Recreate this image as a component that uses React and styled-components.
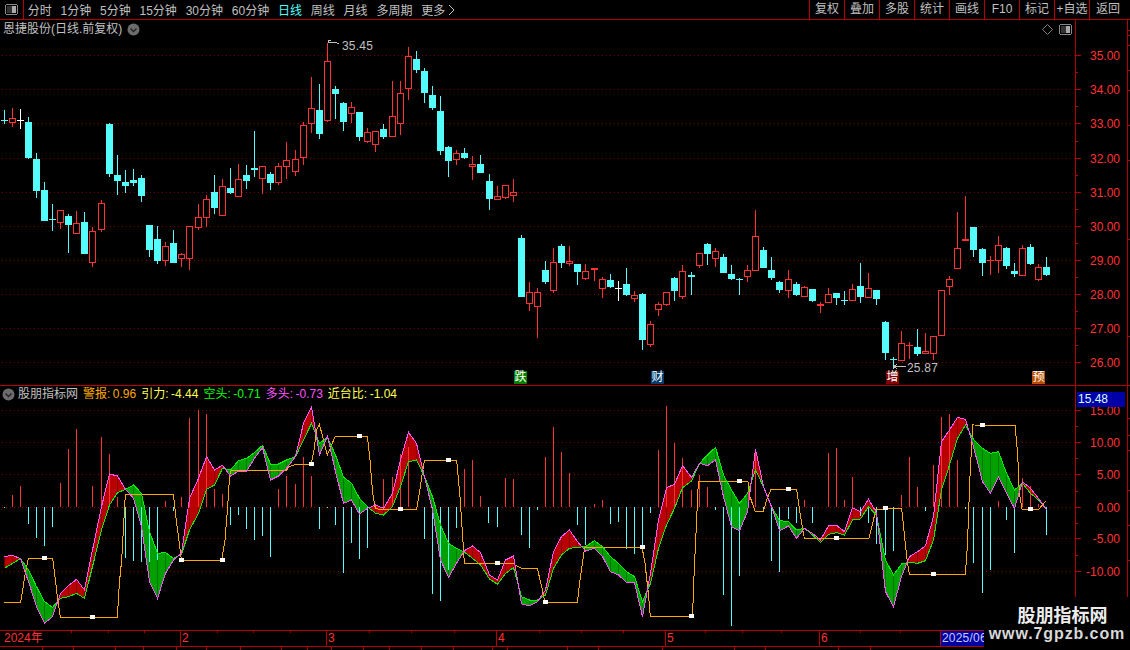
import React from "react";
import styled, { createGlobalStyle } from "styled-components";

const LINE = "#b40000";
const RED = "#ff3232";
const CYAN = "#54fcfc";
const FONT = `"Liberation Sans", "Noto Sans CJK SC", sans-serif`;

const Global = createGlobalStyle`
  html, body { margin: 0; padding: 0; background: #000; }
  #root { width: 1130px; height: 650px; }
`;

const Page = styled.div`
  position: relative;
  width: 1130px;
  height: 650px;
  overflow: hidden;
  background: #000;
  font: 12px ${FONT};
  color: #c0c0c0;
  display: flex;
  flex-direction: column;
`;

const Toolbar = styled.header`
  flex: none;
  height: 19px;
  display: flex;
  align-items: stretch;
  border-bottom: 1px solid ${LINE};
`;
const ToolbarIcon = styled.div`
  width: 23px;
  border-right: 1px solid ${LINE};
  display: flex;
  align-items: center;
  justify-content: center;
`;
const PeriodList = styled.nav`
  display: flex;
  align-items: center;
  gap: 8.8px;
  padding-left: 3.7px;
`;
const Period = styled.span`
  display: inline-flex;
  align-items: center;
  gap: 3px;
  white-space: nowrap;
  color: ${(p) => (p.$active ? CYAN : "#c0c0c0")};
`;
const ToolGroup = styled.div`
  margin-left: auto;
  display: flex;
`;
const ToolButton = styled.button`
  all: unset;
  box-sizing: border-box;
  width: ${(p) => p.$w || 35}px;
  padding-right: ${(p) => p.$pad || 0}px;
  border-left: 1px solid ${LINE};
  text-align: center;
  font: 12px/19px ${FONT};
  color: #c0c0c0;
  white-space: nowrap;
`;

const PanelRow = styled.section`
  position: relative;
  flex: none;
  height: ${(p) => p.$h}px;
  display: flex;
  border-bottom: ${(p) => (p.$rule ? `1px solid ${LINE}` : "none")};
`;
const PlotSvg = styled.svg`
  display: block;
  flex: none;
  width: 1075px;
  height: 100%;
`;
const AxisSvg = styled.svg`
  display: block;
  flex: none;
  width: 51px;
  height: 100%;
  border-left: 1px solid ${LINE};
  border-right: 1px solid ${LINE};
  box-sizing: content-box;
`;
const EdgeSvg = styled.svg`
  display: block;
  flex: none;
  width: 2px;
  height: 100%;
`;

const PanelTitle = styled.div`
  position: absolute;
  left: 3px;
  top: 2px;
  display: flex;
  align-items: center;
  gap: 5px;
  line-height: 14px;
`;
const PanelTools = styled.div`
  position: absolute;
  left: 1042px;
  top: 4px;
  display: flex;
  align-items: center;
  gap: 6px;
`;
const Badge = styled.span`
  position: absolute;
  left: ${(p) => p.$x}px;
  top: 351px;
  width: 13px;
  height: 13px;
  background: ${(p) => p.$bg};
  color: #fff;
  font: 12px/13px ${FONT};
  text-align: center;
`;
const Legend = styled.div`
  position: absolute;
  left: 2px;
  top: 1px;
  display: flex;
  align-items: center;
  line-height: 15px;
  white-space: nowrap;
`;
const LegendName = styled.span`
  margin: 0 5px 0 3px;
  color: #c0c0c0;
`;
const LegendItem = styled.span`
  color: ${(p) => p.$c};
  margin-right: 5px;
`;
const LegendNumber = styled.span`
  margin-left: 2.5px;
`;
const ValueFlag = styled.div`
  position: absolute;
  left: 1077px;
  top: 6px;
  width: 48px;
  height: 15px;
  background: #0000a8;
  color: #d8ffff;
  font: 12px/15px ${FONT};
  padding-left: 1px;
  box-sizing: border-box;
`;

const TimeAxis = styled.div`
  position: relative;
  flex: none;
  height: 15px;
  display: flex;
  border-top: 1px solid ${LINE};
  border-bottom: 1px solid ${LINE};
  color: ${RED};
  line-height: 15px;
`;
const TimeCell = styled.div`
  box-sizing: border-box;
  flex: none;
  width: ${(p) => p.$w}px;
  padding-left: ${(p) => p.$pad || 1}px;
  border-right: 1px solid ${LINE};
`;
const CurrentDate = styled.div`
  background: #0000a0;
  color: #c8c8ff;
  padding: 0 2px 0 1px;
  flex: none;
  letter-spacing: 0.2px;
`;
const TimeTicks = styled.svg`
  position: absolute;
  left: 0;
  top: 0;
  width: 1075px;
  height: 3px;
`;
const TabStrip = styled.div`
  flex: none;
  height: 3px;
  display: flex;
`;
const Tab = styled.div`
  box-sizing: border-box;
  flex: none;
  width: ${(p) => p.$w}px;
  border-right: 1px solid ${LINE};
`;

const Watermark = styled.aside`
  position: absolute;
  left: 984px;
  top: 597px;
  right: 0;
  bottom: 0;
  background: #000;
  display: flex;
  flex-direction: column;
  align-items: center;
  padding-top: 7px;
  box-sizing: border-box;
  color: #ececec;
`;
const WatermarkName = styled.div`
  margin-left: 11px;
  font: 700 18px/20px "Noto Sans CJK SC", sans-serif;
`;
const WatermarkUrl = styled.div`
  font: 700 16px/19px "Liberation Sans", sans-serif;
  letter-spacing: 0.9px;
  color: #d8d8d8;
`;

const candles = [
  [110,120,120,124,"c"],[108,118,123,127,"r"],[109,120,120,129,"w"],[117,122,158,159,"c"],[153,159,191,198,"c"],[182,190,221,221,"c"],[204,219,219,231,"c"],[210,210,223,229,"r"],[214,216,225,253,"c"],[211,223,234,234,"r"],
  [212,222,254,254,"c"],[227,231,263,267,"r"],[200,203,230,232,"r"],[123,124,174,177,"c"],[155,175,181,195,"c"],[170,182,186,193,"c"],[169,180,183,186,"c"],[175,178,196,202,"c"],[225,225,250,257,"c"],[226,239,261,264,"c"],
  [242,246,261,266,"r"],[230,243,263,263,"c"],[253,254,259,267,"r"],[226,226,259,270,"r"],[204,217,228,230,"r"],[195,199,218,227,"r"],[175,192,208,214,"c"],[179,186,216,216,"r"],[168,188,193,194,"c"],[164,179,197,197,"r"],
  [165,175,181,189,"c"],[131,168,170,177,"c"],[166,166,179,194,"r"],[172,174,183,190,"c"],[163,166,183,185,"r"],[142,160,167,179,"r"],[150,159,172,176,"r"],[122,125,158,165,"r"],[77,108,124,133,"r"],[84,110,134,139,"c"],
  [43,61,121,122,"r"],[86,89,94,119,"c"],[102,103,122,131,"c"],[102,107,114,123,"r"],[112,112,137,141,"c"],[128,132,142,143,"r"],[131,131,145,152,"r"],[124,129,137,139,"c"],[81,116,137,137,"r"],[81,93,124,135,"r"],
  [47,56,89,100,"r"],[51,59,70,73,"c"],[68,71,93,103,"c"],[86,95,108,110,"c"],[96,111,151,155,"c"],[146,147,161,177,"c"],[150,153,160,165,"r"],[148,153,158,159,"c"],[156,164,167,180,"r"],[155,164,173,173,"c"],
  [174,181,199,210,"c"],[186,196,200,200,"r"],[185,185,198,199,"r"],[179,192,196,202,"r"],[235,238,297,297,"c"],[282,292,304,311,"r"],[288,292,307,338,"r"],[261,270,282,284,"c"],[248,262,291,293,"r"],[244,246,263,268,"c"],
  [246,261,264,266,"r"],[264,264,272,285,"c"],[264,271,279,280,"r"],[268,268,270,281,"R"],[277,279,289,298,"r"],[274,280,287,288,"c"],[281,288,288,301,"w"],[268,284,295,296,"c"],[291,295,299,302,"r"],[293,294,340,350,"c"],
  [321,324,345,347,"r"],[302,304,310,316,"r"],[292,292,305,306,"r"],[277,278,291,301,"c"],[265,271,297,299,"r"],[272,275,277,295,"C"],[253,253,266,268,"r"],[243,244,254,265,"c"],[248,251,259,267,"r"],[254,257,273,273,"c"],
  [265,274,279,280,"c"],[278,279,279,295,"c"],[265,270,277,282,"r"],[210,236,271,271,"r"],[247,250,268,268,"c"],[257,270,278,280,"c"],[281,282,290,293,"c"],[270,279,291,298,"r"],[282,284,295,296,"c"],[286,287,297,297,"r"],
  [289,289,301,302,"c"],[302,304,306,313,"r"],[288,294,303,303,"r"],[293,293,298,305,"c"],[291,300,300,305,"c"],[284,289,301,301,"r"],[263,286,297,303,"c"],[273,288,298,298,"r"],[290,290,299,305,"c"],[321,322,353,360,"c"],
  [357,359,359,369,"c"],[331,343,361,361,"r"],[342,345,345,359,"r"],[329,347,354,356,"c"],[333,351,354,354,"r"],[336,336,354,360,"r"],[290,290,336,336,"r"],[276,279,287,295,"r"],[212,248,269,269,"r"],[196,239,241,241,"R"],
  [227,227,250,257,"c"],[248,249,263,276,"c"],[256,260,260,275,"r"],[236,245,261,273,"r"],[247,248,266,269,"c"],[263,271,274,277,"c"],[245,248,276,276,"r"],[244,247,264,265,"c"],[264,267,280,281,"r"],[257,267,275,276,"c"],
];

const M = [470,466,476,545,620,670,650,580,557,538,570,450,320,222,228,268,295,380,545,595,520,480,460,295,235,170,210,196,228,214,214,175,142,240,228,205,170,70,20,165,108,215,310,300,342,325,315,
  325,280,180,97,130,230,330,480,532,490,452,438,458,525,540,480,468,612,617,605,570,455,410,390,425,453,445,470,515,525,547,548,650,520,360,263,253,197,232,190,197,180,290,380,392,335,
  148,260,320,392,378,415,385,400,420,378,376,395,323,335,298,338,575,620,530,470,455,437,350,125,90,52,58,140,245,280,232,280,325,245,265,295,330];
const G = [505,490,476,510,560,605,622,595,590,580,595,500,390,315,278,268,255,280,395,460,458,475,462,390,340,268,255,205,210,182,175,158,136,192,192,180,170,120,70,130,112,165,232,250,295,320,340,
  345,320,260,185,180,230,290,375,430,445,457,475,495,537,553,520,503,590,600,600,585,505,465,445,442,440,422,440,470,490,515,530,605,550,445,375,325,263,243,190,165,142,225,270,310,280,
  210,260,320,362,365,390,385,405,427,403,398,405,360,357,320,345,480,525,492,487,490,482,420,270,195,115,75,118,145,160,155,220,270,250,280,300,325];

const px = (i) => 4 + 8 * i + Math.floor((i + 0.5) / 12.1);
const zy = (Y) => 400 + Y / 3;

const zoomed = (off, pts) => pts.map(([X, Y]) => [off + X / 3, zy(Y)]);
const orange = [
  ...zoomed(0, [[13,607],[62,607],[68,570],[74,530],[85,476],[158,476],[165,530],[172,590],[181,652],[352,652],[358,550],[365,480],[376,282],[520,282],[530,370],[538,430],[544,480],[665,482],[675,420],[683,320],[688,240],[691,212],[858,212],[868,200],[885,194],[934,192],[942,150],[950,90],[958,72],[982,165],[1006,108],[1102,108],[1110,180],[1118,280],[1126,325]]),
  ...zoomed(380, [[0,328],[110,328],[118,280],[130,200],[133,182],[230,181],[240,290],[250,440],[253,490],[400,490],[405,495],[425,505],[472,505],[485,560],[495,607],[592,607],[600,540],[612,455],[615,442],[786,441],[795,490],[805,580],[811,649],[938,649],[940,570],[948,400],[955,245],[1104,245],[1110,290],[1125,333]]),
  ...zoomed(750, [[40,335],[50,300],[63,268],[140,268],[150,340],[163,415],[357,415],[378,328],[455,325],[470,470],[478,523],[646,523],[652,440],[660,230],[668,75],[795,76],[803,160],[808,280],[816,328],[866,328],[888,303]]),
];
const squares = [
  ...zoomed(0, [[133,473],[277,650],[544,479],[667,480],[934,191],[1078,107]]),
  ...zoomed(380, [[61,326],[205,180],[352,488],[496,605],[787,440],[934,648],[1078,242]]),
  ...zoomed(750, [[115,266],[259,413],[405,323],[550,521],[697,74],[841,326]]),
];
const redBars = [
  ...zoomed(0, [[37,285],[61,258],[181,250],[205,148],[229,87],[277,258],[304,111],[328,163],[352,292],[496,303],[544,292],[568,54],[595,30],[619,42],[643,267],[667,282],[835,267],[859,228],[886,252],[910,171],[934,228]]),
  ...zoomed(380, [[10,237],[37,232],[61,162],[85,140],[253,207],[277,180],[301,288],[376,234],[400,237],[496,171],[520,81],[544,156],[568,219],[643,312],[667,300],[835,150],[859,18],[883,129],[907,174],[934,270],[958,225],[982,261],[1105,267],[1125,200]]),
  ...zoomed(750, [[15,150],[163,300],[235,159],[259,144],[283,300],[307,231],[454,285],[478,171],[502,261],[550,195],[574,51],[598,42],[622,180],[744,303],[816,234],[840,258],[864,312]]),
];
const cyanBars = [
  ...zoomed(0, [[13,324],[85,372],[109,414],[133,438],[157,381],[376,474],[400,483],[424,486],[448,486],[472,480],[520,333],[691,375],[715,345],[739,387],[763,420],[787,408],[811,471],[958,387],[982,324],[1006,375],[1030,519],[1054,429],[1078,477],[1102,444]]),
  ...zoomed(380, [[133,417],[157,582],[181,603],[205,510],[229,384],[325,369],[352,381],[424,405],[448,444],[472,330],[592,375],[616,436],[691,372],[715,366],[739,447],[763,462],[787,460],[811,339],[1006,330],[1030,585],[1054,678],[1078,528]]),
  ...zoomed(750, [[39,333],[63,483],[87,516],[115,357],[139,369],[187,369],[211,321],[330,348],[354,369],[378,432],[405,465],[429,453],[525,333],[646,327],[669,489],[696,579],[720,510],[768,360],[792,459],[888,405]]),
];

const ZERO = 507;
const priceRows = [[55,"35.00"],[89,"34.00"],[123,"33.00"],[158,"32.00"],[192,"31.00"],[226,"30.00"],[260,"29.00"],[294,"28.00"],[328,"27.00"],[362,"26.00"]];
const indicatorRows = [[410,"15.00"],[442,"10.00"],[474,"5.00"],[507,"0.00"],[538,"-5.00"],[571,"-10.00"]];

const pts = (a) => a.map(([x, y]) => `${x},${y}`).join(" ");

function Grid({ rows }) {
  return rows.map(([y]) => (
    <line key={y} x1="2" x2="1075" y1={y + 0.5} y2={y + 0.5} stroke="#800000" strokeDasharray="1 3" shapeRendering="crispEdges" />
  ));
}

function Candle({ i, d }) {
  const [wt, bt, bb, wb, k] = d;
  const x = px(i);
  const color = k === "c" || k === "C" ? CYAN : k === "w" ? "#fff" : RED;
  const solid = k === "c" || k === "w" || k === "C" || k === "R";
  const doji = bt === bb;
  return (
    <g>
      <rect x={x} y={wt} width="1" height={Math.max(wb - wt, 1)} fill={color} />
      {doji || k === "R" || k === "C" ? (
        <rect x={x - 3} y={bt} width="7" height={Math.max(bb - bt, 1)} fill={color} />
      ) : solid ? (
        <rect x={x - 3} y={bt} width="7" height={bb - bt} fill={color} />
      ) : (
        <rect x={x - 2.5} y={bt + 0.5} width="6" height={bb - bt - 1} fill="#000" stroke={color} />
      )}
    </g>
  );
}

function PriceChart() {
  return (
    <PlotSvg viewBox="0 20 1075 365" shapeRendering="crispEdges">
      <Grid rows={priceRows} />
      {candles.map((d, i) => (
        <Candle key={i} i={i} d={d} />
      ))}
      <g stroke="#c0c0c0" fill="none">
        <polyline points="328,43 328,40 331,40" />
        <polyline points="329,43 332,42 335,42 339,44" />
        <polyline points="905.5,366.5 894,366.5 897,364" />
        <polyline points="894,366.5 897,369" />
      </g>
      <g fill="#c0c0c0" fontSize="12" fontFamily={`"Liberation Sans", sans-serif`} letterSpacing="0.2" shapeRendering="auto">
        <text x="342" y="50">35.45</text>
        <text x="907" y="372">25.87</text>
      </g>
    </PlotSvg>
  );
}

function Ribbon() {
  const out = [];
  for (let i = 0; i < 129; i++) {
    const x0 = px(i) + 0.5;
    const x1 = px(i + 1) + 0.5;
    const [m0, m1, g0, g1] = [zy(M[i]), zy(M[i + 1]), zy(G[i]), zy(G[i + 1])];
    const a = m0 - g0;
    const b = m1 - g1;
    if (a * b < 0) {
      const t = a / (a - b);
      const xc = x0 + (x1 - x0) * t;
      const yc = m0 + (m1 - m0) * t;
      out.push(<polygon key={`a${i}`} points={`${x0},${m0} ${xc},${yc} ${x0},${g0}`} fill={a < 0 ? "#b80000" : "#00a000"} />);
      out.push(<polygon key={`b${i}`} points={`${xc},${yc} ${x1},${m1} ${x1},${g1}`} fill={b < 0 ? "#b80000" : "#00a000"} />);
    } else {
      out.push(<polygon key={i} points={`${x0},${m0} ${x1},${m1} ${x1},${g1} ${x0},${g0}`} fill={a + b < 0 ? "#b80000" : "#00a000"} />);
    }
  }
  return out;
}

function IndicatorChart() {
  const line = (a) => pts(a.map((Y, i) => [px(i) + 0.5, zy(Y)]));
  return (
    <PlotSvg viewBox="0 386 1075 244">
      <Grid rows={indicatorRows} />
      <Ribbon />
      <g shapeRendering="crispEdges">
        {redBars.map(([x, y], i) => (
          <rect key={i} x={Math.floor(x)} y={y} width="1" height={ZERO - y} fill={RED} />
        ))}
        {cyanBars.map(([x, y], i) => (
          <rect key={i} x={Math.floor(x)} y={ZERO} width="1" height={y - ZERO} fill={CYAN} />
        ))}
      </g>
      <g fill="none" strokeWidth="1" shapeRendering="crispEdges">
        <polyline points={pts(orange)} stroke="#ffa800" />
        <polyline points={line(G)} stroke="#00f000" />
        <polyline points={line(M)} stroke="#ff54ff" />
      </g>
      <g shapeRendering="crispEdges">
        {squares.map(([x, y], i) => (
          <rect key={i} x={Math.round(x) - 2} y={Math.round(y) - 2} width="5" height="4" fill="#fff" />
        ))}
      </g>
    </PlotSvg>
  );
}

function ValueAxis({ rows, top, h }) {
  const ys = rows.map((r) => r[0]);
  const minors = ys.slice(0, -1).map((y, i) => Math.round((y + ys[i + 1]) / 2));
  return (
    <AxisSvg viewBox={`1076 ${top} 51 ${h}`} shapeRendering="crispEdges">
      {rows.map(([y, t]) => (
        <g key={y}>
          <rect x="1076" y={y} width="5" height="1" fill={LINE} />
          <text x="1120" y={y + 5} textAnchor="end" fill={RED} fontSize="12" fontFamily={`"Liberation Sans", sans-serif`} shapeRendering="auto">
            {t}
          </text>
        </g>
      ))}
      {minors.map((y) => (
        <rect key={y} x="1076" y={y} width="2" height="1" fill={LINE} />
      ))}
    </AxisSvg>
  );
}

function EdgeTicks({ ys, top, h }) {
  return (
    <EdgeSvg viewBox={`0 ${top} 2 ${h}`} shapeRendering="crispEdges">
      {ys.map((y) => (
        <rect key={y} x="0" y={y} width="2" height="1" fill={LINE} />
      ))}
    </EdgeSvg>
  );
}

function PanelIcon() {
  return (
    <svg width="13" height="11" viewBox="0 0 13 11" shapeRendering="crispEdges">
      <rect x="0.5" y="0.5" width="12" height="10" rx="2" fill="none" stroke="#888" />
      <rect x="7" y="2" width="4" height="7" fill="#aaa" />
      <rect x="2" y="2" width="5" height="7" fill="#333" />
    </svg>
  );
}

function RoundChevron() {
  return (
    <svg width="13" height="13" viewBox="0 0 13 13">
      <circle cx="6.5" cy="6.5" r="6" fill="#6c6c6c" />
      <polyline points="3.5,5.5 6.5,8.5 9.5,5.5" fill="none" stroke="#222" strokeWidth="1.3" />
    </svg>
  );
}

const periods = ["分时", "1分钟", "5分钟", "15分钟", "30分钟", "60分钟", "日线", "周线", "月线", "多周期"];
const tools = ["复权", "叠加", "多股", "统计", "画线", "F10", "标记", "+自选"];
const timeCells = [[181, "2024年", 4], [146, "2"], [170, "3"], [169, "4"], [154, "5"], [121, "6"]];
const timeTicks = [71, 108, 144, 217, 253, 290, 369, 411, 454, 539, 581, 623, 705, 742, 781, 860, 900];
const tabStops = [43,74,116,144,177,207,241,282,308,332,364,390,422,454,493,508,568,599,663,735,766,839,871];
const legend = [
  ["#ffa800", "警报:", "0.96"],
  ["#ffff54", "引力:", "-4.44"],
  ["#00ff00", "空头:", "-0.71"],
  ["#ff54ff", "多头:", "-0.73"],
  ["#ffff54", "近台比:", "-1.04"],
];

export default function App() {
  return (
    <Page>
      <Global />
      <Toolbar>
        <ToolbarIcon>
          <PanelIcon />
        </ToolbarIcon>
        <PeriodList>
          {periods.map((t) => (
            <Period key={t} $active={t === "日线"}>{t}</Period>
          ))}
          <Period>
            更多
            <svg width="7" height="12" viewBox="0 0 7 12">
              <polyline points="1,1 6,6 1,11" fill="none" stroke="#c0c0c0" />
            </svg>
          </Period>
        </PeriodList>
        <ToolGroup>
          {tools.map((t) => (
            <ToolButton key={t}>{t}</ToolButton>
          ))}
          <ToolButton $w={41} $pad={4}>返回</ToolButton>
        </ToolGroup>
      </Toolbar>

      <PanelRow $h={365} $rule>
        <PriceChart />
        <ValueAxis rows={priceRows} top={20} h={365} />
        <EdgeTicks ys={[30, 35, 45, 70, 90, 125, 160, 239, 336]} top={20} h={365} />
        <PanelTitle>
          恩捷股份(日线.前复权)
          <RoundChevron />
        </PanelTitle>
        <PanelTools>
          <svg width="11" height="11" viewBox="0 0 11 11">
            <polygon points="5.5,0.5 10.5,5.5 5.5,10.5 0.5,5.5" fill="none" stroke="#808080" />
          </svg>
          <PanelIcon />
        </PanelTools>
        <Badge $x={514} $bg="#008000">跌</Badge>
        <Badge $x={651} $bg="#003c6e">财</Badge>
        <Badge $x={886} $bg="#800000">增</Badge>
        <Badge $x={1032} $bg="#b85000">预</Badge>
      </PanelRow>

      <PanelRow $h={244}>
        <IndicatorChart />
        <ValueAxis rows={indicatorRows} top={386} h={244} />
        <EdgeTicks ys={[418, 435, 450, 490, 525, 560]} top={386} h={244} />
        <Legend>
          <RoundChevron />
          <LegendName>股朋指标网</LegendName>
          {legend.map(([c, label, value]) => (
            <LegendItem key={label} $c={c}>
              {label}
              <LegendNumber>{value}</LegendNumber>
            </LegendItem>
          ))}
        </Legend>
        <ValueFlag>15.48</ValueFlag>
      </PanelRow>

      <TimeAxis>
        {timeCells.map(([w, t, pad]) => (
          <TimeCell key={t} $w={w} $pad={pad}>{t}</TimeCell>
        ))}
        <CurrentDate>2025/06</CurrentDate>
        <TimeTicks viewBox="0 0 1075 3" shapeRendering="crispEdges">
          {timeTicks.map((x) => (
            <rect key={x} x={x} y="0" width="1" height="2" fill={LINE} />
          ))}
        </TimeTicks>
      </TimeAxis>

      <TabStrip>
        {tabStops.map((x, i) => (
          <Tab key={x} $w={x - (i ? tabStops[i - 1] : 0)} />
        ))}
      </TabStrip>

      <Watermark>
        <WatermarkName>股朋指标网</WatermarkName>
        <WatermarkUrl>www.7gpzb.com</WatermarkUrl>
      </Watermark>
    </Page>
  );
}
